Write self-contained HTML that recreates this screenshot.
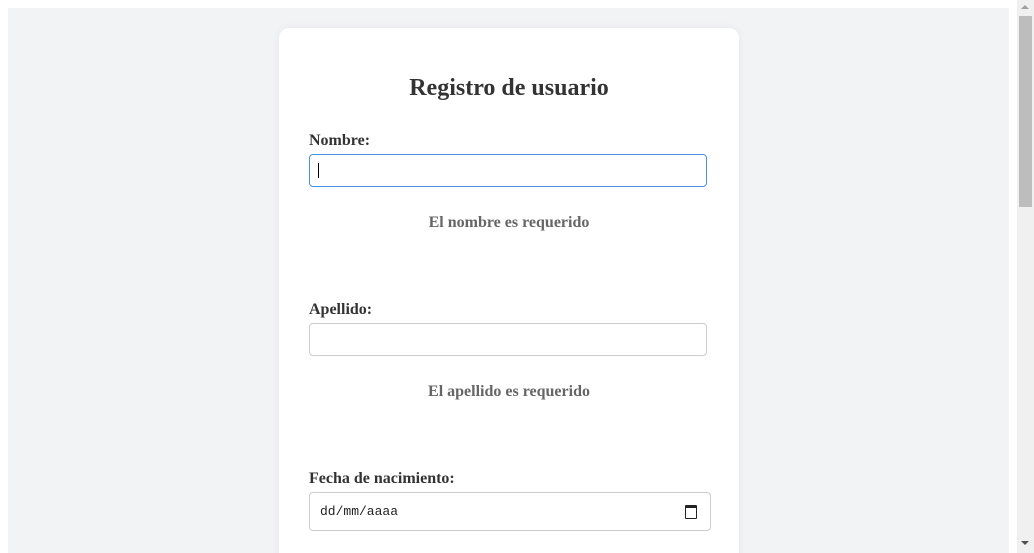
<!DOCTYPE html><html style="overflow:hidden;height:553px"><head><style>
body{margin:0;width:1034px;height:553px;overflow:hidden;background:#fff;font-family:"Liberation Serif",serif;position:relative}
.bg{position:absolute;left:8px;top:8px;width:1001px;height:545px;background:#f2f3f5;overflow:hidden}
.card{position:absolute;left:271px;top:20px;width:460px;height:540px;background:#fff;border-radius:10px;box-shadow:0 0 8px rgba(0,0,0,.06)}
h1{position:absolute;margin:0;width:460px;text-align:center;font-size:24px;color:#333;line-height:28px}
.l{position:absolute;left:309px;font-weight:bold;font-size:16px;color:#333;line-height:18px}
.i{position:absolute;left:309px;width:396px;height:31px;border:1px solid #ccc;border-radius:4px;background:#fff}
.e{position:absolute;left:279px;width:460px;text-align:center;font-weight:bold;font-size:16px;color:#666;line-height:18px}
.sb{position:absolute;left:1017px;top:0;width:17px;height:553px;background:#f0f0f0}
</style></head><body>
<div class="bg"><div class="card"></div></div>
<h1 style="left:279px;top:74px">Registro de usuario</h1>
<div class="l" style="top:132px">Nombre:</div>
<div class="i" style="top:154px;border-color:#4a90e2"><div style="position:absolute;left:8px;top:8px;width:1px;height:15px;background:#000"></div></div>
<div class="e" style="top:214px">El nombre es requerido</div>
<div class="l" style="top:301px">Apellido:</div>
<div class="i" style="top:323px"></div>
<div class="e" style="top:383px">El apellido es requerido</div>
<div class="l" style="top:470px">Fecha de nacimiento:</div>
<div class="i" style="top:492px;width:400px;height:37px"><span style="position:absolute;left:10px;top:11px;font-family:'Liberation Mono',monospace;font-size:13px;color:#222">dd/mm/aaaa</span><div style="position:absolute;left:375px;top:12px;width:10px;height:10px;border:1.5px solid #222;border-top-width:3px;border-radius:1px"></div></div>
<div class="sb"><div style="position:absolute;left:2px;top:16px;width:13px;height:191px;background:#bdbdbd"></div>
<div style="position:absolute;left:4px;top:5px;border:4px solid transparent;border-bottom:4px solid #a0a0a0;border-top:0"></div>
<div style="position:absolute;left:4px;top:541px;border:4px solid transparent;border-top:4px solid #505050;border-bottom:0"></div></div>
</body></html>
